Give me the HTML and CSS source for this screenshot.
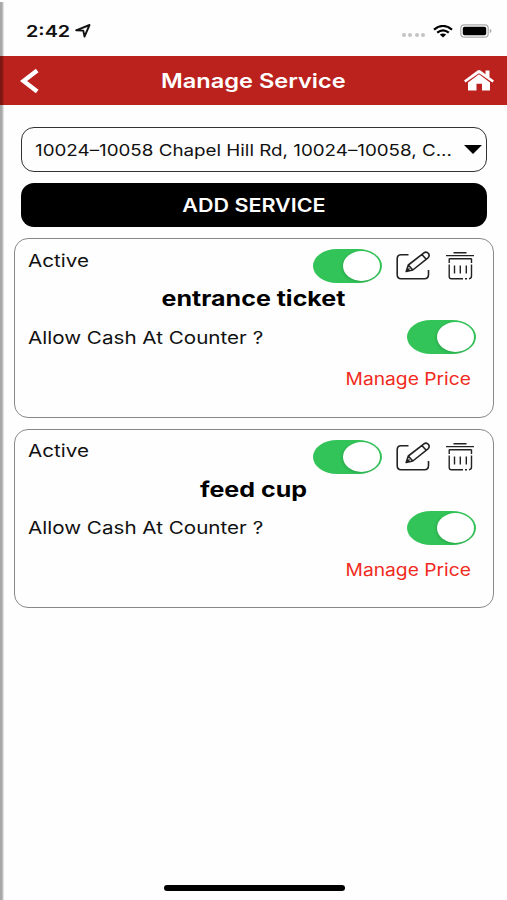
FILE: index.html
```html
<!DOCTYPE html>
<html lang="en">
<head>
  <meta charset="UTF-8" />
  <meta name="viewport" content="width=device-width, initial-scale=1.0"/>
  <title>Manage Service</title>
  <link rel="stylesheet" href="styles.css">
</head>
<body>

  <!-- Shared icons -->
  <svg class="sprite">
    <symbol id="icon-edit" viewBox="0 0 34 30">
      <path d="M12.5 3.8H5Q1.200 3.800 1.200 8V23.500Q1.200 27.700 5 27.700H28.500Q32.500 27.700 32.500 23.500V19" />
      <path d="M10.200 20.500L12.300 14L28 1.800Q30.500.300 32.500 2.500Q34 4.800 32 6.800L16.800 19ZM12.300 14L16.800 19M25.800 3.500L30.300 8.200M10.200 20.500L13.500 17.500" />
    </symbol>
    <symbol id="icon-trash" viewBox="0 0 28 30">
      <path class="lid" d="M7.500 1.800H20.500M0 4.600H28" />
      <path d="M3.200 7.800H25.500M3.200 7.500V12M3.200 13.500V25.500Q3.200 27.700 5.500 27.700H17M19 27.700H21M23 27.700Q25.500 27.500 25.500 25V13.500M25.500 12V7.500" />
      <path d="M8.500 14.500V22.500M14.300 14.500V22.500M20.300 14.500V22.500" />
    </symbol>
  </svg>

  <div class="screen">
    <div class="status-bar">
      <span class="time">2:42</span>
      <svg class="location" viewBox="0 0 16 14"><path d="M1.200 6.300L14.500 1L9.500 12.600L8.300 6.600Z" /></svg>
      <div class="status-right">
        <div class="dots"><i></i><i></i><i></i><i></i></div>
        <svg class="wifi" viewBox="0 0 20 13">
          <path d="M1 4.700Q10-2.800 19 4.700M4.200 7.700Q10 3 15.800 7.700" />
          <path class="fill" d="M6.800 9.600Q10 7.200 13.200 9.600L10 12.600Z" />
        </svg>
        <svg class="battery" viewBox="0 0 32 14">
          <rect class="case" x=".8" y=".8" width="27.400" height="12.400" rx="3.500" />
          <rect x="2.800" y="2.800" width="23.400" height="8.400" rx="1.800" />
          <path class="tip" d="M29.800 4.800Q31.500 5.500 31.500 7T29.800 9.200Z" />
        </svg>
      </div>
    </div>

    <header class="header">
      <svg class="back" viewBox="0 0 20 26"><path d="M17.200 2.500L3.500 13L17.200 23.500" /></svg>
      <h1 class="title">Manage Service</h1>
      <svg class="home" viewBox="0 0 30 21">
        <path d="M15 4.300L26 12.500V20.500H18V13.800H12.500V20.500H4V12.500Z" />
        <path d="M0 10.600L13.500.5Q15-.5 16.500.5L21.500 4.200V.5H25.500V7.200L30 10.600L28.500 12.400L15 3.200L1.500 12.400Z" />
      </svg>
    </header>

    <div class="controls">
      <div class="select">
        <span class="select-text">10024–10058 Chapel Hill Rd, 10024–10058, C...</span>
        <svg class="arrow" viewBox="0 0 18 9"><path d="M0 0H18L9 9Z" /></svg>
      </div>
      <button class="btn"><span>ADD SERVICE</span></button>
    </div>

    <main class="services">
      <section class="card">
        <div class="row">
          <span class="label active">Active</span>
          <div class="actions">
            <span class="switch"></span>
            <svg class="icon edit"><use href="#icon-edit" /></svg>
            <svg class="icon trash"><use href="#icon-trash" /></svg>
          </div>
        </div>
        <h2 class="name">entrance ticket</h2>
        <div class="row cash">
          <span class="label">Allow Cash At Counter ?</span>
          <span class="switch"></span>
        </div>
        <a class="price">Manage Price</a>
      </section>

      <section class="card">
        <div class="row">
          <span class="label active">Active</span>
          <div class="actions">
            <span class="switch"></span>
            <svg class="icon edit"><use href="#icon-edit" /></svg>
            <svg class="icon trash"><use href="#icon-trash" /></svg>
          </div>
        </div>
        <h2 class="name">feed cup</h2>
        <div class="row cash">
          <span class="label">Allow Cash At Counter ?</span>
          <span class="switch"></span>
        </div>
        <a class="price">Manage Price</a>
      </section>
    </main>

    <div class="home-bar"></div>
  </div>

</body>
</html>
```

FILE: styles.css
```css
* {
  box-sizing: border-box;
}

body {
  margin: 0;
  font-family: Inter, "Liberation Sans", sans-serif;
  background: #fefefe;
  color: #111;
  overflow: hidden;
}

.sprite {
  display: none;
}

.screen {
  position: relative;
  height: 900px;
  display: flex;
  flex-direction: column;
}

/* shadow along the left edge */
.screen::after {
  content: "";
  position: absolute;
  left: 0;
  top: 2px;
  bottom: 0;
  width: 4px;
  background: linear-gradient(to right, rgba(0,0,0,0.34) 45%, rgba(0,0,0,0.05));
}

svg {
  display: block;
  flex: none;
}

.status-bar {
  height: 56px;
  padding: 6px 15px 0 26px;
  display: flex;
  align-items: center;
}

.time {
  width: 49px;
  font-size: 16.5px;
  font-weight: 600;
  transform: scaleX(1.2);
  transform-origin: left;
}

.location {
  width: 16px;
  height: 14px;
  fill: none;
  stroke: #111;
  stroke-width: 1.9;
  stroke-linejoin: round;
}

.status-right {
  margin-left: auto;
  display: flex;
  align-items: center;
}

.dots {
  display: flex;
  gap: 2.5px;
  margin: 8px 8px 0 0;
}

.dots i {
  width: 4px;
  height: 4px;
  border-radius: 50%;
  background: #c4c4c4;
}

.wifi {
  width: 20px;
  height: 13px;
  margin-right: 7px;
  fill: none;
  stroke: #000;
  stroke-width: 2.2;
}

.wifi .fill {
  fill: #000;
  stroke: none;
}

.battery {
  width: 32px;
  height: 14px;
}

.battery .case {
  fill: none;
  stroke: #aaa;
  stroke-width: 1.2;
}

.battery .tip {
  fill: #aaa;
}

.header {
  height: 49px;
  padding: 0 13px 0 20px;
  background: #bb211d;
  color: #fff;
  display: flex;
  align-items: center;
  justify-content: space-between;
}

.back {
  width: 20px;
  height: 26px;
  margin-right: 3px;
  fill: none;
  stroke: #fff;
  stroke-width: 4.4;
}

.title {
  margin: 0;
  font-size: 20px;
  font-weight: 600;
  transform: scaleX(1.18);
}

.home {
  width: 30px;
  height: 21px;
  fill: #fff;
}

.controls {
  padding: 22px 20px 0 21px;
  display: flex;
  flex-direction: column;
  gap: 11px;
}

.select {
  height: 45px;
  padding: 0 4px 0 13px;
  border: 1.5px solid #333;
  border-radius: 13px;
  display: flex;
  align-items: center;
  justify-content: space-between;
}

.select-text {
  font-size: 16px;
  white-space: nowrap;
  transform: scaleX(1.174);
  transform-origin: left;
}

.arrow {
  width: 18px;
  height: 9px;
}

.btn {
  height: 44px;
  border: none;
  border-radius: 13px;
  background: #000;
  color: #fff;
  font-family: inherit;
  font-size: 18px;
  font-weight: 600;
}

.btn span {
  display: inline-block;
  transform: scaleX(1.195);
}

.services {
  padding: 11px 13px 0 14px;
  display: flex;
  flex-direction: column;
  gap: 11px;
}

.card {
  height: 179.5px;
  padding: 10px 17px 0 13px;
  border: 1.5px solid #888;
  border-radius: 14px;
  display: flex;
  flex-direction: column;
}

.row {
  height: 34px;
  display: flex;
  align-items: center;
  justify-content: space-between;
}

.label {
  font-size: 17.5px;
  white-space: nowrap;
  transform: scaleX(1.178);
  transform-origin: left;
}

.active {
  margin-bottom: 12px;
}

.actions {
  display: flex;
  align-items: center;
}

.switch {
  width: 69px;
  height: 34px;
  padding: 2px;
  border-radius: 24px / 17px;
  background: #32c458;
  display: flex;
  justify-content: flex-end;
}

.switch::after {
  content: "";
  width: 37px;
  height: 30px;
  border-radius: 50%;
  background: #fff;
  box-shadow: -1px 1px 3px rgba(0,0,0,0.15);
}

.icon {
  fill: none;
  stroke: #222;
  stroke-width: 1.6;
  stroke-linejoin: round;
}

.edit {
  width: 34px;
  height: 30px;
  margin-left: 14px;
}

.trash {
  width: 28px;
  height: 30px;
  margin: 0 2px 0 16px;
  stroke-width: 1.4;
}

.name {
  margin: 0 -3px 0 0;
  line-height: 32px;
  font-size: 20.5px;
  font-weight: 700;
  color: #000;
  text-align: center;
  transform: scaleX(1.22);
}

.cash {
  margin-top: 5px;
}

.price {
  align-self: flex-end;
  margin: 13px 5px 0 0;
  line-height: 24px;
  font-size: 17px;
  color: #f02a20;
  transform: scaleX(1.13);
  transform-origin: right;
}

.home-bar {
  width: 181px;
  height: 6px;
  margin: auto auto 9px 163.5px;
  border-radius: 3px;
  background: #000;
}
```
